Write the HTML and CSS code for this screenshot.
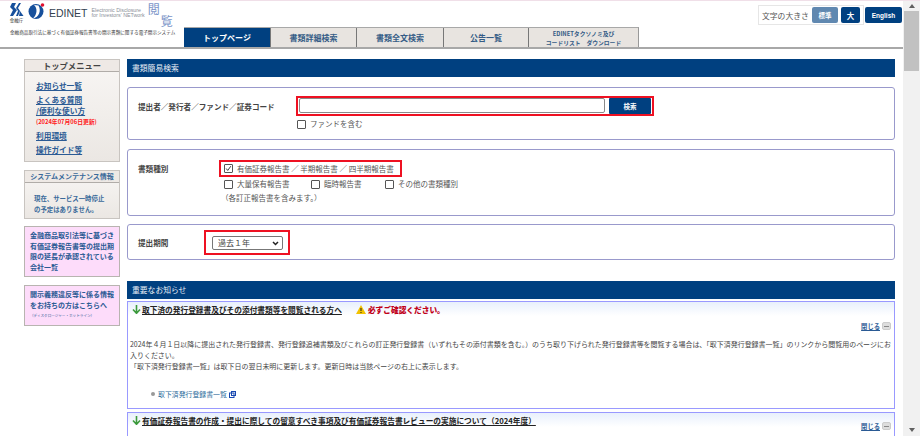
FILE: index.html
```html
<!DOCTYPE html>
<html lang="ja">
<head>
    <meta charset="UTF-8">
    <title>EDINET 閲覧</title>
    <link rel="stylesheet" href="styles.css">
</head>
<body>
<div class="page">
    <div class="content">
        <header class="site-header">
            <div class="brand">
                <div class="logo-row">
                    <div class="fsa">
                        <svg width="15" height="14" viewBox="0 0 15 14"><path d="M3 0h4L5 4l3 3-4 6H1l3-6-3-3zM10 0h2L9 5l2 3-2 5H7l2-5-2-3z" fill="#17509c"/><path d="M11 8l3.500 5H10z" fill="#17509c"/></svg>
                        <span class="fsa-name">金融庁</span>
                    </div>
                    <svg class="edinet-mark" width="18" height="16" viewBox="0 0 18 16"><circle cx="8" cy="8.500" r="7.500" fill="#17509c"/><path d="M6 2c3.500 3 3.500 9-1 13.500 6-1 8.500-8 5.500-13z" fill="#fff"/><circle cx="14.500" cy="2" r="1.800" fill="#e01030"/></svg>
                    <span class="edinet">EDINET</span>
                    <span class="edinet-sub">Electronic Disclosure<br>for Investors' NETwork</span>
                    <span class="etsuran"><span>閲</span><span class="second">覧</span></span>
                </div>
                <p class="tagline">金融商品取引法に基づく有価証券報告書等の開示書類に関する電子開示システム</p>
            </div>
            <nav class="tabs">
                <a class="tab active">トップページ</a>
                <a class="tab">書類詳細検索</a>
                <a class="tab">書類全文検索</a>
                <a class="tab tab-notice">公告一覧</a>
                <a class="tab tab-wide">EDINETタクソノミ及び<br>コードリスト　ダウンロード</a>
            </nav>
            <div class="tools">
                <div class="font-size">
                    <span>文字の大きさ</span>
                    <a class="tool-btn current">標準</a>
                    <a class="tool-btn large">大</a>
                </div>
                <a class="tool-btn english">English</a>
            </div>
        </header>

        <div class="columns">
            <aside class="sidebar">
                <section class="side-box menu">
                    <h2>トップメニュー</h2>
                    <ul>
                        <li><a>お知らせ一覧</a></li>
                        <li class="faq"><a>よくある質問<br>/便利な使い方</a><span class="updated">(2024年07月06日更新)</span></li>
                        <li><a>利用環境</a></li>
                        <li><a>操作ガイド等</a></li>
                    </ul>
                </section>
                <section class="side-box maint">
                    <h2>システムメンテナンス情報</h2>
                    <p>現在、サービス一時停止<br>の予定はありません。</p>
                </section>
                <a class="pink-box first">金融商品取引法等に基づき有価証券報告書等の提出期限の延長が承認されている会社一覧</a>
                <a class="pink-box second">開示義務違反等に係る情報をお持ちの方はこちらへ<small>（ディスクロージャー・ホットライン）</small></a>
            </aside>

            <main class="main">
                <h2 class="bar">書類簡易検索</h2>
                <section class="panel panel-code">
                    <div class="label">提出者／発行者／ファンド／証券コード</div>
                    <div class="code-fields">
                        <div class="red-box code-box">
                            <input class="code-input" type="text">
                            <button class="search-btn">検索</button>
                        </div>
                        <label class="check fund"><i class="box"></i>ファンドを含む</label>
                    </div>
                </section>
                <section class="panel panel-kind">
                    <div class="label label-kind">書類種別</div>
                    <div class="kind-fields">
                        <div class="red-box kind-box">
                            <label class="check"><i class="box checked"><svg width="9" height="9" viewBox="0 0 9 9"><path d="M1.500 4.500l2 2.500 4-5.500" fill="none" stroke="#333" stroke-width="1.200"/></svg></i>有価証券報告書 ／ 半期報告書 ／ 四半期報告書</label>
                        </div>
                        <div class="kind-row">
                            <label class="check"><i class="box"></i>大量保有報告書</label>
                            <label class="check"><i class="box"></i>臨時報告書</label>
                            <label class="check"><i class="box"></i>その他の書類種別</label>
                        </div>
                        <p class="note">（各訂正報告書を含みます。）</p>
                    </div>
                </section>
                <section class="panel panel-period">
                    <div class="label label-period">提出期間</div>
                    <div class="red-box period-box">
                        <select class="period"><option>過去１年</option></select>
                    </div>
                </section>

                <h2 class="bar notice-bar">重要なお知らせ</h2>
                <article class="notice notice-first">
                    <h3>
                        <svg width="9" height="9" viewBox="0 0 9 9"><path d="M4.500 0v8M1 4.500l3.500 3.800L8 4.500" fill="none" stroke="#3c9a3c" stroke-width="1.600"/></svg>
                        <u>取下済の発行登録書及びその添付書類等を閲覧される方へ</u>
                        <svg class="warn" width="10" height="9" viewBox="0 0 10 9"><path d="M5 0l5 9H0z" fill="#f2c200"/><path d="M5 3v3M5 7v1" stroke="#222"/></svg>
                        <b>必ずご確認ください。</b>
                    </h3>
                    <div class="close-row"><a>閉じる</a><i class="minus"></i></div>
                    <p>2024年４月１日以降に提出された発行登録書、発行登録追補書類及びこれらの訂正発行登録書（いずれもその添付書類を含む。）のうち取り下げられた発行登録書等を閲覧する場合は、「取下済発行登録書一覧」のリンクから閲覧用のページにお入りください。<br>「取下済発行登録書一覧」は取下日の翌日未明に更新します。更新日時は当該ページの右上に表示します。</p>
                    <div class="doc-link"><i class="dot"></i><a>取下済発行登録書一覧</a>
                        <svg width="7" height="7" viewBox="0 0 7 7"><rect x="0.500" y="2" width="4.500" height="4.500" fill="none" stroke="#1848b0"/><rect x="2.500" y="0.500" width="4" height="4" fill="none" stroke="#1848b0"/></svg>
                    </div>
                </article>
                <article class="notice notice-second">
                    <h3>
                        <svg width="9" height="9" viewBox="0 0 9 9"><path d="M4.500 0v8M1 4.500l3.500 3.800L8 4.500" fill="none" stroke="#3c9a3c" stroke-width="1.600"/></svg>
                        <u>有価証券報告書の作成・提出に際しての留意すべき事項及び有価証券報告書レビューの実施について（2024年度）</u>
                    </h3>
                    <div class="close-row close-second"><a>閉じる</a><i class="minus"></i></div>
                </article>
            </main>
        </div>
    </div>

    <div class="scrollbar">
        <span class="arrow up"></span>
        <span class="thumb"></span>
        <span class="arrow down"></span>
    </div>
</div>
</body>
</html>
```

FILE: styles.css
```css
* {
    box-sizing: border-box;
}
html, body {
    margin: 0;
    height: 436px;
    overflow: hidden;
}
body {
    font-family: "Noto Sans CJK JP", "Noto Sans", sans-serif;
    font-size: 9px;
    color: #333;
    background: #fff;
}
.page {
    display: flex;
    height: 436px;
    border-top: 1px solid #f0dfe8;
}
.content {
    flex: 1;
    min-width: 0;
}

/* header */
.site-header {
    display: flex;
    height: 48px;
    border-bottom: 2px solid #a8a8a8;
}
.brand {
    width: 184px;
    padding-left: 9px;
    flex-shrink: 0;
}
.logo-row {
    display: flex;
    height: 27px;
}
.fsa {
    width: 15px;
    padding-top: 2px;
    display: flex;
    flex-direction: column;
    align-items: center;
}
.fsa svg {
    flex-shrink: 0;
}
.fsa-name {
    font-size: 4.500px;
    line-height: 6px;
    white-space: nowrap;
    color: #333;
}
.edinet-mark {
    margin: 2px 0 0 4px;
}
.edinet {
    font-family: "Liberation Sans", sans-serif;
    font-size: 10.500px;
    line-height: 12px;
    margin: 6px 0 0 3px;
    color: #33414f;
}
.edinet-sub {
    font-family: "Liberation Sans", sans-serif;
    font-size: 5.300px;
    line-height: 5px;
    margin: 7px 0 0 4px;
    color: #8a8f98;
    white-space: nowrap;
}
.etsuran {
    display: flex;
    font-size: 12px;
    line-height: 13px;
    color: #7a94c8;
    margin: 1px 0 0 3px;
}
.etsuran .second {
    margin: 12px 0 0 1px;
}
.tagline {
    margin: 1px 0 0 1px;
    font-size: 4.600px;
    line-height: 6px;
    white-space: nowrap;
    color: #333;
}
.tabs {
    display: flex;
    align-self: flex-end;
    height: 20px;
    border-top: 1px solid #a8a8a8;
    border-right: 1px solid #999;
}
.tab {
    width: 86px;
    display: flex;
    align-items: center;
    justify-content: center;
    background: #e8e4e0;
    border-left: 1px solid #777;
    font-size: 8px;
    font-weight: 700;
    color: #355c86;
}
.tab:nth-child(3) {
    width: 87px;
}
.tab.tab-notice {
    width: 85px;
}
.tab.active {
    background: #004080;
    color: #fff;
    border-left: 0;
}
.tab.tab-wide {
    width: 110px;
    font-size: 5.800px;
    line-height: 9px;
    text-align: center;
}
.tools {
    margin-left: auto;
    display: flex;
    align-items: flex-start;
    gap: 1px;
    padding: 4px 1px 0 0;
}
.font-size {
    display: flex;
    align-items: center;
    gap: 3px;
    height: 20px;
    width: 106px;
    padding: 0 3px;
    border: 1px solid #e6e6e6;
    font-size: 7.800px;
    color: #555;
}
.font-size span {
    margin-right: auto;
    white-space: nowrap;
}
.tool-btn {
    display: flex;
    align-items: center;
    justify-content: center;
    height: 16px;
    border-radius: 2px;
    background: #004080;
    color: #fff;
    font-size: 6.500px;
    font-weight: 700;
}
.tool-btn.current {
    width: 26px;
    background: #6088b0;
}
.tool-btn.large {
    width: 19px;
    font-size: 7.500px;
}
.tool-btn.english {
    width: 37px;
    margin-top: 2px;
    font-family: "Liberation Sans", sans-serif;
}

.columns {
    display: flex;
    padding: 10px 8px 0 24px;
    gap: 7px;
}

/* left column */
.sidebar {
    width: 96px;
    flex-shrink: 0;
}
.side-box {
    border: 1px solid #c8c4c0;
    background: linear-gradient(#f8f6f4, #ebe7e3);
}
.side-box h2 {
    margin: 0;
    height: 12px;
    line-height: 11px;
    text-align: center;
    font-size: 8.300px;
    font-weight: 700;
    color: #444;
    background: #eee9e5;
    border-bottom: 1px solid #b0aca8;
}
.menu {
    height: 103px;
}
.menu ul {
    list-style: none;
    margin: 0;
    padding: 8px 0 0 11px;
}
.menu li {
    margin-bottom: 3px;
    line-height: 11px;
    font-size: 7.700px;
    font-weight: 700;
}
.menu a, .close-row a {
    color: #2a5a94;
    text-decoration: underline;
}
.updated {
    display: block;
    color: #ff2020;
    font-size: 5.800px;
    line-height: 11px;
    white-space: nowrap;
}
.maint {
    margin-top: 8px;
    height: 49px;
}
.maint h2 {
    font-size: 7px;
    color: #3a6a9a;
    white-space: nowrap;
}
.maint p {
    margin: 0;
    padding: 10px 0 0 9px;
    font-size: 6.400px;
    line-height: 11px;
    font-weight: 700;
    color: #3a6a9a;
}
.pink-box {
    display: block;
    border: 1px solid #b8b4b0;
    background: #fddcfa;
    color: #2a5a94;
    font-size: 7px;
    font-weight: 700;
    line-height: 10.500px;
    padding: 3px 3px 0 5px;
}
.pink-box.first {
    margin-top: 7px;
    height: 51px;
}
.pink-box.second {
    margin-top: 8px;
    height: 41px;
}
.pink-box small {
    display: block;
    font-size: 3.600px;
    line-height: 6px;
    margin-top: 3px;
    white-space: nowrap;
    font-weight: 400;
}

/* main column */
.main {
    width: 768px;
    flex-shrink: 0;
}
.bar {
    margin: 0;
    height: 18px;
    line-height: 17px;
    padding-left: 5px;
    background: #004080;
    color: #e8eef5;
    font-size: 7.800px;
    font-weight: 400;
}
.panel {
    display: flex;
    border: 1px solid #9999cc;
    border-radius: 3px;
    margin-top: 10px;
}
.label {
    font-size: 7.600px;
    font-weight: 700;
    color: #444;
    white-space: nowrap;
}
.red-box {
    border: 2px solid #ee1122;
}
.panel-code {
    height: 53px;
    padding: 8px 0 0 10px;
}
.panel-code .label {
    width: 158px;
    padding-top: 5px;
}
.code-box {
    display: flex;
    align-items: flex-start;
    width: 358px;
    height: 20px;
    padding: 0 0 0 1px;
    gap: 4px;
}
.code-input {
    width: 306px;
    height: 15px;
    margin: 0;
    padding: 0;
    border: 1px solid #8a8a8a;
    border-radius: 2px;
    background: #fff;
}
.search-btn {
    width: 42px;
    height: 16px;
    padding: 0;
    border: 0;
    border-radius: 1px;
    background: #004080;
    color: #fff;
    font-family: inherit;
    font-size: 6.500px;
    font-weight: 700;
}
.check {
    display: flex;
    align-items: center;
    gap: 4px;
    font-size: 7.500px;
    line-height: 10px;
    color: #555;
    white-space: nowrap;
}
.box {
    display: flex;
    align-items: center;
    justify-content: center;
    width: 9px;
    height: 9px;
    border: 1px solid #555;
    border-radius: 1px;
    background: #fff;
}
.fund {
    margin: 3px 0 0 1px;
}
.panel-kind {
    height: 67px;
    margin-top: 9px;
    padding: 10px 0 0 10px;
}
.label-kind {
    width: 81px;
    padding-top: 3px;
}
.kind-box {
    width: 183px;
    height: 17px;
    padding-left: 3px;
    display: flex;
    align-items: center;
}
.kind-row {
    display: flex;
    margin: 2px 0 0 5px;
}
.kind-row .check:nth-child(1) {
    width: 87px;
}
.kind-row .check:nth-child(2) {
    width: 74px;
}
.note {
    margin: 3px 0 0 2px;
    font-size: 7.500px;
    line-height: 12px;
    color: #555;
}
.panel-period {
    height: 36px;
    margin-top: 8px;
    padding: 5px 0 0 10px;
}
.label-period {
    width: 66px;
    padding-top: 7px;
}
.period-box {
    width: 86px;
    height: 25px;
    padding: 4px 0 0 6px;
}
.period {
    display: block;
    appearance: none;
    width: 71px;
    height: 14px;
    padding: 0 0 0 5px;
    border: 1px solid #777;
    border-radius: 2px;
    background: #fff url("data:image/svg+xml,%3Csvg xmlns='http://www.w3.org/2000/svg' width='7' height='5'%3E%3Cpath d='M1 1l2.500 2.500L6 1' fill='none' stroke='%23222' stroke-width='1.500'/%3E%3C/svg%3E") no-repeat right 3px center;
    color: #444;
    font-family: inherit;
    font-size: 8px;
    line-height: 12px;
}
.notice-bar {
    margin-top: 21px;
}
.notice {
    border: 1px solid #9999ff;
    padding: 0 2px;
    background: linear-gradient(#e8f0fc, #fff 14px);
}
.notice-first {
    height: 108px;
    margin-top: 2px;
}
.notice-second {
    margin-top: 3px;
    height: 40px;
}
.notice h3 {
    display: flex;
    align-items: center;
    gap: 1px;
    margin: 0;
    height: 15px;
    padding-left: 2px;
    font-size: 7.700px;
    font-weight: 700;
    color: #222;
    white-space: nowrap;
}
.notice h3 .warn {
    margin-left: 13px;
}
.notice h3 b {
    color: #c00018;
    margin-left: 1px;
}
.close-row {
    display: flex;
    justify-content: flex-end;
    align-items: center;
    gap: 2px;
    height: 10px;
    margin-top: 4px;
    font-size: 6.300px;
    font-weight: 700;
}
.close-second {
    margin-top: -7px;
}
.minus {
    width: 9px;
    height: 8px;
    border-radius: 2px;
    background: linear-gradient(#888, #888) center / 5px 1px no-repeat #ddd;
    border: 1px solid #ccc;
    margin-right: 1px;
}
.notice p {
    margin: 8px 0 0;
    font-size: 6.970px;
    line-height: 11px;
    color: #444;
}
.doc-link {
    display: flex;
    align-items: center;
    gap: 2px;
    margin: 17px 0 0 21px;
    font-size: 6.900px;
    line-height: 10px;
    color: #2a6a9a;
}
.dot {
    width: 4px;
    height: 4px;
    border-radius: 50%;
    background: #999;
    margin-right: 1px;
}

/* scrollbar */
.scrollbar {
    width: 17px;
    flex-shrink: 0;
    display: flex;
    flex-direction: column;
    align-items: center;
    background: #f1f1f1;
}
.thumb {
    width: 15px;
    height: 60px;
    margin-top: 3px;
    background: #c1c1c1;
}
.arrow {
    width: 0;
    height: 0;
    margin-top: 3px;
    border-left: 3px solid transparent;
    border-right: 3px solid transparent;
}
.arrow.up {
    border-bottom: 4px solid #606060;
}
.arrow.down {
    margin-top: auto;
    margin-bottom: 4px;
    border-top: 4px solid #606060;
}
```
